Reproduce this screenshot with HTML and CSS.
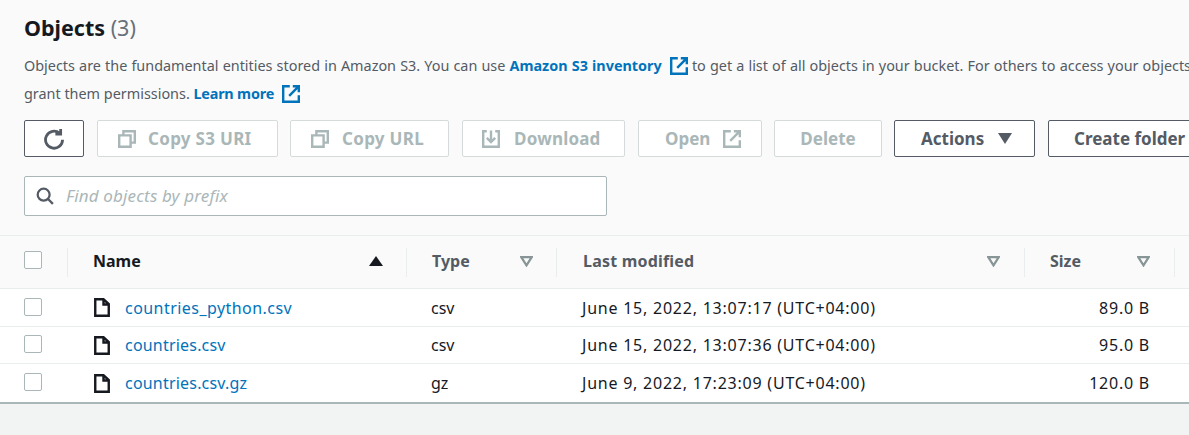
FILE: index.html
```html
<!DOCTYPE html>
<html lang="en">
<head>
<meta charset="utf-8">
<title>Objects</title>
<link rel="stylesheet" href="styles.css">
</head>
<body>
<main class="page">
  <section class="head">
    <h1 class="title">Objects <span class="count">(3)</span></h1>
    <p class="desc">Objects are the fundamental entities stored in Amazon S3. You can use <a class="strong-link" href="#">Amazon S3 inventory<svg class="ext" viewBox="0.5 0.5 15 15"><path d="M7 1.5H1.5v13h13V9M9.5 1.5h5v5M14.5 1.5l-8 8"/></svg></a> to get a list of all objects in your bucket. For others to access your objects<br><span class="line-two">grant them permissions. <a class="strong-link tight" href="#">Learn more<svg class="ext" viewBox="0.5 0.5 15 15"><path d="M7 1.5H1.5v13h13V9M9.5 1.5h5v5M14.5 1.5l-8 8"/></svg></a></span></p>
    <div class="toolbar">
      <button class="btn active w-refresh" aria-label="Refresh"><svg class="ico ico-refresh" viewBox="1 0 14 15"><path d="M13.5 8a5.8 5.8 0 1 1-2-4.4M12.2 .6v3.6H8.6"/></svg></button>
      <button class="btn w-s3"><svg class="ico" viewBox="0.5 0.5 15 15"><path d="M5 5V1.5h9.5V11H11M1.5 5H11v9.5H1.5z"/></svg>Copy S3 URI</button>
      <button class="btn w-url"><svg class="ico" viewBox="0.5 0.5 15 15"><path d="M5 5V1.5h9.5V11H11M1.5 5H11v9.5H1.5z"/></svg>Copy URL</button>
      <button class="btn w-dl"><svg class="ico" viewBox="0.5 0.5 15 15"><path d="M4.5 1.5h-3v13h13v-13h-3M8 1v9M4.5 7 8 10.5 11.5 7"/></svg>Download</button>
      <button class="btn w-open">Open<svg class="ico ico-after" viewBox="0.5 0.5 15 15"><path d="M7 1.5H1.5v13h13V9M9.5 1.5h5v5M14.5 1.5l-8 8"/></svg></button>
      <button class="btn w-del">Delete</button>
      <button class="btn active w-act">Actions<span class="caret"></span></button>
      <button class="btn active w-new">Create folder</button>
    </div>
    <label class="search">
      <svg class="search-ico" viewBox="0 0 16 16"><circle cx="6.8" cy="6.8" r="5.3"/><path d="m10.7 10.7 4.3 4.3"/></svg>
      <input class="search-input" type="text" placeholder="Find objects by prefix">
    </label>
  </section>

  <section class="table">
    <div class="row header">
      <div class="cell c-check"><span class="box box-h"></span></div>
      <div class="cell c-name th dark sep">Name<span class="sort-up"></span></div>
      <div class="cell c-type th sep">Type<svg class="sort" viewBox="0 0 12 10"><path d="M1.2 1h9.6L6 8.6z"/></svg></div>
      <div class="cell c-date th sep">Last modified<svg class="sort" viewBox="0 0 12 10"><path d="M1.2 1h9.6L6 8.6z"/></svg></div>
      <div class="cell c-size th sep">Size<svg class="sort" viewBox="0 0 12 10"><path d="M1.2 1h9.6L6 8.6z"/></svg></div>
      <div class="cell c-end sep"></div>
    </div>
    <div class="row item r1">
      <div class="cell c-check"><span class="box"></span></div>
      <div class="cell c-name"><svg class="file" viewBox="0 0 16 19"><path d="M1.25 1.25H9.5L14.75 6v11.75H1.25zM9.5 1.25V6.5h5.25"/></svg><a class="wide" href="#">countries_python.csv</a></div>
      <div class="cell c-type td">csv</div>
      <div class="cell c-date td num">June 15, 2022, 13:07:17 (UTC+04:00)</div>
      <div class="cell c-size td num">89.0 B</div>
      <div class="cell c-end"></div>
    </div>
    <div class="row item r2">
      <div class="cell c-check"><span class="box"></span></div>
      <div class="cell c-name"><svg class="file" viewBox="0 0 16 19"><path d="M1.25 1.25H9.5L14.75 6v11.75H1.25zM9.5 1.25V6.5h5.25"/></svg><a href="#">countries.csv</a></div>
      <div class="cell c-type td">csv</div>
      <div class="cell c-date td num">June 15, 2022, 13:07:36 (UTC+04:00)</div>
      <div class="cell c-size td num">95.0 B</div>
      <div class="cell c-end"></div>
    </div>
    <div class="row item r3">
      <div class="cell c-check"><span class="box"></span></div>
      <div class="cell c-name"><svg class="file" viewBox="0 0 16 19"><path d="M1.25 1.25H9.5L14.75 6v11.75H1.25zM9.5 1.25V6.5h5.25"/></svg><a href="#">countries.csv.gz</a></div>
      <div class="cell c-type td">gz</div>
      <div class="cell c-date td num">June 9, 2022, 17:23:09 (UTC+04:00)</div>
      <div class="cell c-size td num">120.0 B</div>
      <div class="cell c-end"></div>
    </div>
  </section>
</main>
</body>
</html>
```
FILE: styles.css
```css
* { box-sizing: border-box; }
html, body { margin: 0; padding: 0; height: 100%; overflow: hidden; }
body { background: #f2f3f3; font-family: "Noto Sans", "Open Sans", sans-serif; color: #545b64; }
.page { width: 1189px; height: 435px; overflow: hidden; }
.head { background: #fafafa; height: 236px; padding: 12px 0 0 24px; border-bottom: 1px solid #eaeded; }
.title { margin: 0; font-size: 21.5px; line-height: 32px; font-weight: 700; color: #16191f; height: 32px; }
.count { font-weight: 400; color: #687078; }
.desc { margin: 8px 0 0; font-size: 14.4px; word-spacing: 0.4px; line-height: 28px; white-space: nowrap; color: #545b64; }
.line-two { word-spacing: 0; }
.strong-link { color: #0073bb; font-weight: 700; text-decoration: none; }
.tight { letter-spacing: -0.2px; }
.ext { display: inline-block; vertical-align: -4px; width: 18px; height: 18px; margin-left: 8px; fill: none; stroke: currentColor; stroke-width: 2; }
.toolbar { display: flex; margin-top: 12px; height: 37px; width: 1300px; }
.btn { flex: none; display: flex; align-items: center; justify-content: flex-start; height: 37px; padding: 0; border: 1px solid #d5dbdb; border-radius: 2px; background: #fff; color: #aab7b8; font: 700 17px "Noto Sans", "Open Sans", sans-serif; }
.btn.active { border-color: #545b64; color: #545b64; background: #fff; }
.w-refresh { width: 60px; margin-right: 13px; justify-content: center; }
.w-s3 { width: 181px; margin-right: 12px; padding-left: 20px; letter-spacing: 0.3px; }
.w-url { width: 159px; margin-right: 13px; padding-left: 20px; letter-spacing: 0.3px; }
.w-dl { width: 163px; margin-right: 13px; padding-left: 19px; letter-spacing: 0.2px; }
.w-dl .ico { margin-right: 14px; }
.w-open { width: 124px; margin-right: 12px; padding-left: 26px; }
.w-del { width: 108px; margin-right: 12px; justify-content: center; }
.w-act { width: 141px; margin-right: 13px; padding-left: 26px; }
.w-new { width: 170px; padding-left: 25px; }
.ico { width: 18px; height: 18px; margin-right: 12px; fill: none; stroke: currentColor; stroke-width: 2; }
.w-url .ico { margin-right: 13px; }
.ico-after { margin: 0 0 0 13px; }
.ico-refresh { width: 21px; height: 22px; margin: 0; stroke-width: 1.9; }
.caret { width: 0; height: 0; margin-left: 14px; border-left: 7.5px solid transparent; border-right: 7.5px solid transparent; border-top: 11px solid #545b64; }
.search { display: flex; align-items: center; width: 583px; height: 40px; margin-top: 19px; padding-left: 11px; background: #fff; border: 1px solid #aab7b8; border-radius: 2px; }
.search-ico { width: 18px; height: 18px; margin-right: 12px; fill: none; stroke: #545b64; stroke-width: 2; }
.search-input { flex: 1; min-width: 0; border: 0; outline: 0; background: transparent; font: italic 400 17px "Noto Sans", "Open Sans", sans-serif; letter-spacing: 0.15px; color: #16191f; padding: 0 0 2px; }
.search-input::placeholder { color: #aab7b8; opacity: 1; }
.table { background: #fff; border-bottom: 2px solid #aab7b8; }
.row { display: grid; grid-template-columns: 67px 339px 150px 468px 150px 15px; align-items: center; }
.header { height: 53px; background: #fafafa; border-bottom: 1px solid #eaeded; }
.item { border-bottom: 1px solid #eaeded; }
.r1 { height: 38px; }
.r2 { height: 37px; }
.r3 { height: 38px; border-bottom: 0; }
.cell { display: flex; align-items: center; min-width: 0; white-space: nowrap; }
.c-check { padding-left: 24px; }
.box { display: block; width: 18px; height: 18px; margin-top: -2px; background: #fff; border: 1px solid #aab7b8; border-radius: 2px; }
.box-h { margin-top: -4px; }
.th { height: 29px; padding-bottom: 2px; font-size: 16px; font-weight: 700; color: #545b64; justify-content: space-between; }
.sep { border-left: 1px solid #eaeded; }
.c-end { height: 29px; }
.dark { color: #16191f; }
.th.c-name { padding-left: 25px; padding-right: 23px; }
.th.c-type { padding-left: 25px; padding-right: 23px; }
.th.c-date { padding-left: 26px; padding-right: 24px; letter-spacing: 0.2px; }
.th.c-size { padding-left: 25px; padding-right: 24px; }
.sort { width: 13px; height: 11px; fill: none; stroke: #879596; stroke-width: 2; }
.sort-up { width: 0; height: 0; border-left: 7px solid transparent; border-right: 7px solid transparent; border-bottom: 10px solid #16191f; }
.item .c-name { padding-left: 27px; }
.file { width: 16px; height: 19px; margin-right: 15px; fill: none; stroke: #16191f; stroke-width: 2.4; }
.item a { color: #0073bb; font-size: 16px; letter-spacing: 0.2px; text-decoration: none; }
.item a.wide { letter-spacing: 0.45px; }
.td { font-size: 16px; color: #16191f; }
.num { letter-spacing: 0.77px; }
.item .c-type { padding-left: 25px; }
.item .c-date { padding-left: 26px; }
.item .c-size { justify-content: flex-end; padding-right: 24px; }
```
